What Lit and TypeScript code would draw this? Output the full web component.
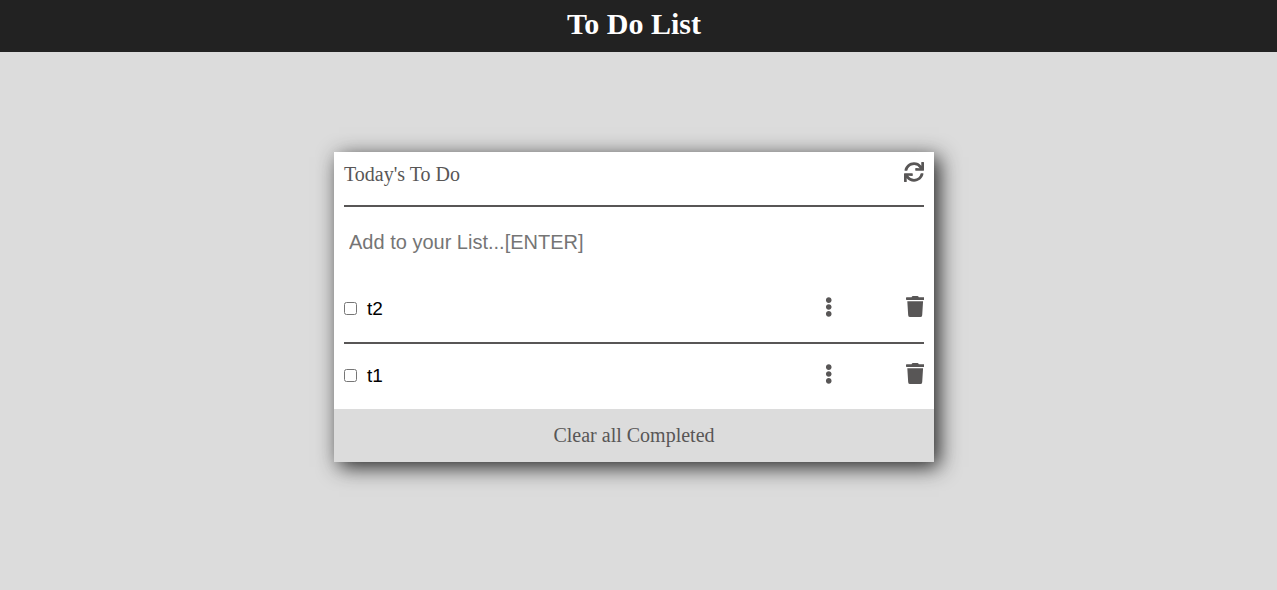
import { LitElement, html, css, svg } from "lit";
import { customElement, state } from "lit/decorators.js";

interface Task {
  id: number;
  text: string;
  done: boolean;
}

const syncIcon = svg`<path d="M440.65 12.57l4 82.77A247.16 247.16 0 0 0 255.83 8C134.73 8 33.91 94.92 12.29 209.82A12 12 0 0 0 24.09 224h49.05a12 12 0 0 0 11.67-9.26 175.91 175.91 0 0 1 317-56.94l-101.46-4.86a12 12 0 0 0-12.57 12v47.41a12 12 0 0 0 12 12H500a12 12 0 0 0 12-12V12a12 12 0 0 0-12-12h-47.37a12 12 0 0 0-11.98 12.57zM255.83 432a175.61 175.61 0 0 1-146-77.8l101.8 4.87a12 12 0 0 0 12.57-12v-47.4a12 12 0 0 0-12-12H12a12 12 0 0 0-12 12V500a12 12 0 0 0 12 12h47.35a12 12 0 0 0 12-12.6l-4.15-82.57A247.17 247.17 0 0 0 255.83 504c121.11 0 221.93-86.92 243.55-201.82a12 12 0 0 0-11.8-14.18h-49.05a12 12 0 0 0-11.67 9.26A175.86 175.86 0 0 1 255.83 432z"/>`;
const dotsIcon = svg`<path d="M96 184c39.8 0 72 32.2 72 72s-32.2 72-72 72-72-32.2-72-72 32.2-72 72-72zM24 80c0 39.8 32.2 72 72 72s72-32.2 72-72S135.8 8 96 8 24 40.2 24 80zm0 352c0 39.8 32.2 72 72 72s72-32.2 72-72-32.2-72-72-72-72 32.2-72 72z"/>`;
const trashIcon = svg`<path d="M432 32H312l-9.4-18.7A24 24 0 0 0 281.1 0H166.8a23.72 23.72 0 0 0-21.4 13.3L136 32H16A16 16 0 0 0 0 48v32a16 16 0 0 0 16 16h416a16 16 0 0 0 16-16V48a16 16 0 0 0-16-16zM53.2 467a48 48 0 0 0 47.9 45h245.8a48 48 0 0 0 47.9-45L416 128H32z"/>`;

@customElement("app-root")
export class AppRoot extends LitElement {
  static styles = css`
    :host {
      display: block;
      min-height: 100vh;
      background: #dcdcdc;
      color: #585656;
      font-family: "Liberation Serif", "Times New Roman", serif;
      font-size: 20px;
    }
    * {
      box-sizing: border-box;
    }
    .banner {
      padding: 6px 9px 10px 0;
      background: #222;
      color: #fff;
      text-align: center;
    }
    .banner-title {
      margin: 0;
      font-size: 30px;
      line-height: 36px;
    }
    .main {
      padding: 100px 9px 100px 0;
    }
    .card {
      max-width: 600px;
      margin: 0 auto;
      background: #fff;
      box-shadow: 5px 5px 20px #222;
    }
    .body {
      padding: 0 10px;
    }
    .head {
      display: flex;
      justify-content: space-between;
      align-items: flex-start;
      padding: 10px 0 19px;
      border-bottom: 2px solid #585656;
    }
    .head-title {
      margin: 0;
      font-size: 20px;
      font-weight: 400;
      line-height: 24px;
    }
    .icon-button {
      display: flex;
      padding: 0;
      border: 0;
      background: none;
      color: inherit;
      cursor: pointer;
    }
    .icon {
      display: block;
      height: 20px;
      fill: currentColor;
    }
    .trash {
      height: 21px;
    }
    .new-task {
      display: block;
      width: 100%;
      height: 70px;
      padding: 0 5px;
      border: 0;
      outline: 0;
      background: none;
      font-family: "Liberation Sans", Arial, sans-serif;
      font-size: 20px;
    }
    .new-task::placeholder {
      color: #757575;
    }
    .list {
      margin: 0;
      padding: 0;
      list-style: none;
    }
    .item {
      display: flex;
      align-items: center;
      height: 67px;
      padding-bottom: 2px;
      border-bottom: 2px solid #585656;
    }
    .item:last-child {
      height: 65px;
      border-bottom: 0;
    }
    .label {
      display: flex;
      flex: 1;
      align-items: center;
      gap: 10px;
      color: #000;
      font-family: "Liberation Sans", Arial, sans-serif;
      font-size: 19px;
    }
    .check {
      width: 13px;
      height: 13px;
      margin: 0;
    }
    .actions {
      display: flex;
      align-items: center;
      gap: 73px;
      padding-bottom: 4px;
    }
    .clear {
      display: block;
      width: 100%;
      padding: 15px;
      border: 0;
      background: #dcdcdc;
      color: inherit;
      font: inherit;
      line-height: 23px;
      cursor: pointer;
    }
  `;

  @state() private tasks: Task[] = [
    { id: 2, text: "t2", done: false },
    { id: 1, text: "t1", done: false },
  ];

  private add(e: KeyboardEvent) {
    const input = e.target as HTMLInputElement;
    const text = input.value.trim();
    if (e.key !== "Enter" || !text) return;
    this.tasks = [{ id: Date.now(), text, done: false }, ...this.tasks];
    input.value = "";
  }

  private toggle(id: number) {
    this.tasks = this.tasks.map((t) => (t.id === id ? { ...t, done: !t.done } : t));
  }

  private remove(id: number) {
    this.tasks = this.tasks.filter((t) => t.id !== id);
  }

  private clearDone() {
    this.tasks = this.tasks.filter((t) => !t.done);
  }

  private renderTask(task: Task) {
    return html`<li class="item">
      <label class="label">
        <input class="check" type="checkbox" .checked=${task.done} @change=${() => this.toggle(task.id)} />
        <span>${task.text}</span>
      </label>
      <div class="actions">
        <button class="icon-button" type="button" aria-label="Options">
          <svg class="icon" viewBox="0 0 192 512">${dotsIcon}</svg>
        </button>
        <button class="icon-button" type="button" aria-label="Delete" @click=${() => this.remove(task.id)}>
          <svg class="icon trash" viewBox="0 0 448 512">${trashIcon}</svg>
        </button>
      </div>
    </li>`;
  }

  render() {
    return html`
      <header class="banner"><h1 class="banner-title">To Do List</h1></header>
      <main class="main">
        <section class="card">
          <div class="body">
            <div class="head">
              <h2 class="head-title">Today's To Do</h2>
              <button class="icon-button" type="button" aria-label="Refresh">
                <svg class="icon" viewBox="0 0 512 512">${syncIcon}</svg>
              </button>
            </div>
            <input
              class="new-task"
              type="text"
              aria-label="New task"
              placeholder="Add to your List...[ENTER]"
              @keydown=${this.add}
            />
            <ul class="list">
              ${this.tasks.map((t) => this.renderTask(t))}
            </ul>
          </div>
          <button class="clear" type="button" @click=${this.clearDone}>Clear all Completed</button>
        </section>
      </main>
    `;
  }
}
